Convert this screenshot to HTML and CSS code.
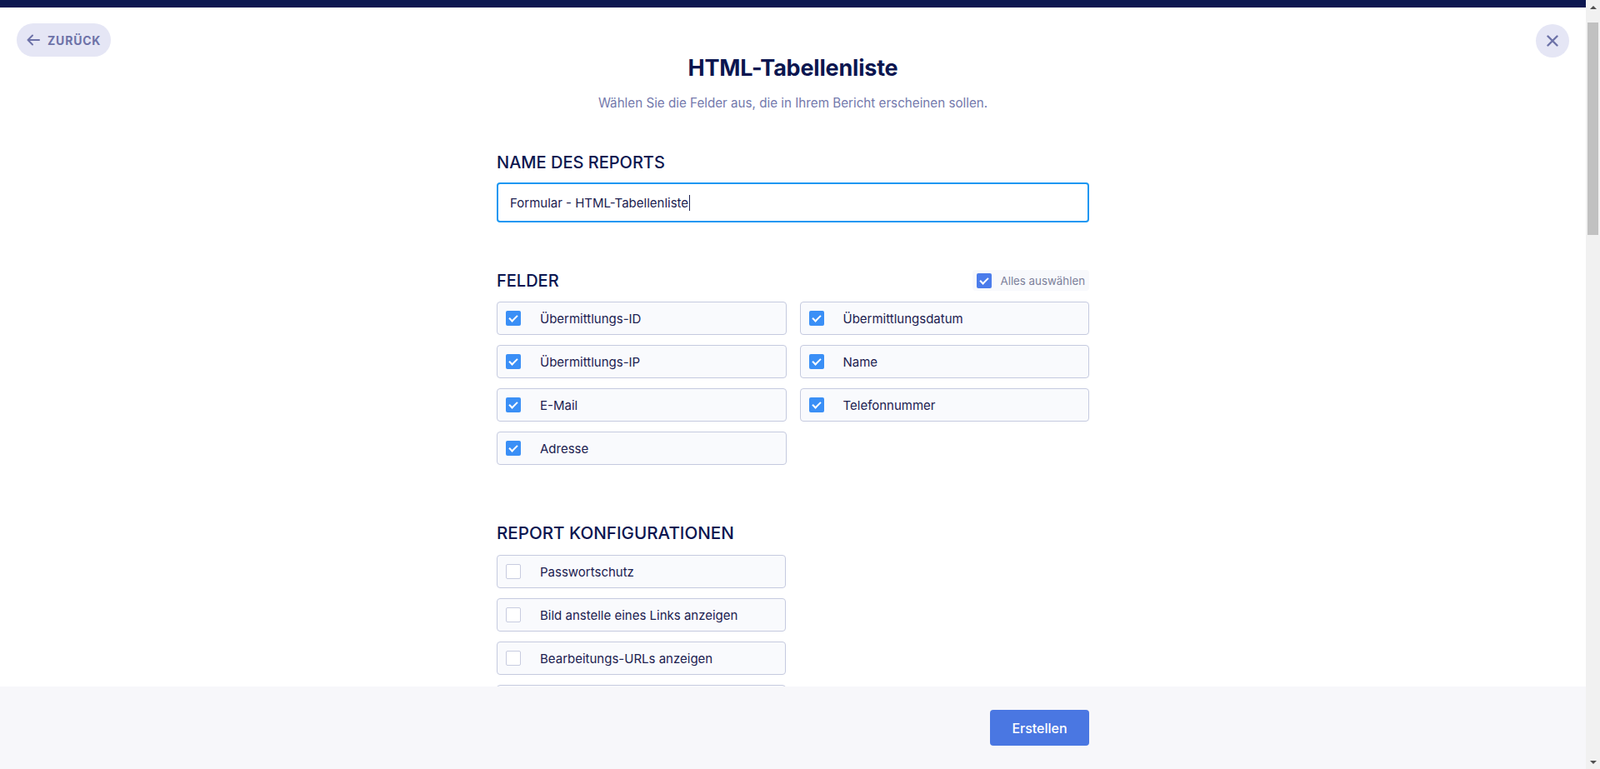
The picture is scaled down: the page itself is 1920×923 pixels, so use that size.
FILE: index.html
```html
<!DOCTYPE html>
<html lang="de">
<head>
    <meta charset="UTF-8">
    <meta name="viewport" content="width=device-width, initial-scale=1.0">
    <title>HTML-Tabellenliste</title>
    <link rel="stylesheet" href="styles.css">
</head>
<body>
    <div class="topbar"></div>

    <div class="head">
        <button class="back-btn">
            <svg width="16" height="14" viewBox="0 0 16 14" fill="none" stroke="currentColor" stroke-width="2" stroke-linecap="round" stroke-linejoin="round">
                <path d="M15 7H1.5M7 1.5L1.5 7L7 12.5"/>
            </svg>
            ZURÜCK
        </button>
        <div class="intro">
            <h1>HTML-Tabellenliste</h1>
            <p>Wählen Sie die Felder aus, die in Ihrem Bericht erscheinen sollen.</p>
        </div>
        <button class="close-btn">
            <svg width="14" height="14" viewBox="0 0 14 14" fill="none" stroke="currentColor" stroke-width="2.4" stroke-linecap="round">
                <path d="M1.5 1.5L12.5 12.5M12.5 1.5L1.5 12.5"/>
            </svg>
        </button>
    </div>

    <main class="content">
        <section>
            <h2>NAME DES REPORTS</h2>
            <div class="text-input">Formular - HTML-Tabellenliste<span class="caret"></span></div>
        </section>

        <section class="felder">
            <div class="section-head">
                <h2>FELDER</h2>
                <label class="select-all">
                    <span class="box checked alt"></span>
                    Alles auswählen
                </label>
            </div>
            <div class="field-grid">
                <label class="option"><span class="box checked"></span>Übermittlungs-ID</label>
                <label class="option"><span class="box checked"></span>Übermittlungsdatum</label>
                <label class="option"><span class="box checked"></span>Übermittlungs-IP</label>
                <label class="option"><span class="box checked"></span>Name</label>
                <label class="option"><span class="box checked"></span>E-Mail</label>
                <label class="option"><span class="box checked"></span>Telefonnummer</label>
                <label class="option"><span class="box checked"></span>Adresse</label>
            </div>
        </section>

        <section class="config">
            <h2>REPORT KONFIGURATIONEN</h2>
            <div class="config-list">
                <label class="option"><span class="box"></span>Passwortschutz</label>
                <label class="option"><span class="box"></span>Bild anstelle eines Links anzeigen</label>
                <label class="option"><span class="box"></span>Bearbeitungs-URLs anzeigen</label>
                <label class="option"><span class="box"></span>Leere Felder ausblenden</label>
            </div>
        </section>
    </main>

    <footer class="footer">
        <div class="footer-inner">
            <button class="create-btn">Erstellen</button>
        </div>
    </footer>

    <!-- nachgebildete Fenster-Scrollleiste -->
    <aside class="scrollbar">
        <span class="sb-arrow up"></span>
        <span class="sb-track"><span class="sb-thumb"></span></span>
        <span class="sb-arrow down"></span>
    </aside>
</body>
</html>
```

FILE: styles.css
```css
body {
    margin: 0;
    padding-right: 17px;
    background: #fff;
    font-family: Inter, "Noto Sans", sans-serif;
    color: #0b1650;
    overflow: hidden;
}

.topbar {
    height: 9px;
    background: #0b1650;
}

.head {
    display: grid;
    grid-template-columns: 1fr auto 1fr;
    align-items: start;
    padding: 19px 20px 0;
}

.back-btn {
    justify-self: start;
    display: flex;
    align-items: center;
    gap: 9px;
    height: 40px;
    padding: 0 12px 0 12px;
    border: none;
    border-radius: 20px;
    background: #e5e6f5;
    color: #6d72a8;
    font-family: inherit;
    font-size: 14px;
    font-weight: 700;
    letter-spacing: 0.8px;
    cursor: pointer;
}

.close-btn {
    justify-self: end;
    width: 40px;
    height: 40px;
    margin-top: 1px;
    border: none;
    border-radius: 50%;
    background: #e5e6f5;
    color: #6d72a8;
    display: flex;
    align-items: center;
    justify-content: center;
    cursor: pointer;
}

.intro {
    text-align: center;
}

.intro h1 {
    margin: 34px 0 0;
    font-size: 27px;
    line-height: 40px;
    font-weight: 700;
    letter-spacing: -0.2px;
    color: #0b1650;
}

.intro p {
    margin: 10px 0 0;
    font-size: 15.2px;
    line-height: 24px;
    color: #7479ac;
}

.content {
    width: 711px;
    margin: 47px auto 0;
    padding-bottom: 140px;
}

h2 {
    margin: 0 0 12px;
    font-size: 20px;
    line-height: 24px;
    font-weight: 500;
    color: #0b1650;
}

.text-input {
    height: 48px;
    box-sizing: border-box;
    border: 2px solid #1b97f2;
    border-radius: 4px;
    padding: 0 14px;
    display: flex;
    align-items: center;
    font-size: 15px;
    color: #1c2150;
}

.caret {
    display: inline-block;
    width: 1px;
    height: 19px;
    margin-left: 1px;
    background: #1c2150;
}

.felder {
    margin-top: 57px;
}

.section-head {
    display: flex;
    justify-content: space-between;
    align-items: center;
    margin-bottom: 13px;
}

.section-head h2 {
    margin: 0;
}

.select-all {
    display: flex;
    align-items: center;
    gap: 10px;
    height: 25px;
    padding: 0 5px;
    border-radius: 4px;
    background: #f8f9fc;
    font-size: 13.3px;
    color: #7c809a;
}

.field-grid {
    display: grid;
    grid-template-columns: 1fr 1fr;
    gap: 12px 16px;
}

.config {
    margin-top: 70px;
}

.config h2 {
    font-size: 20.6px;
    margin-bottom: 14px;
}

.config-list {
    display: flex;
    flex-direction: column;
    gap: 12px;
    width: 347px;
}

.option {
    display: flex;
    align-items: center;
    gap: 23px;
    height: 40px;
    box-sizing: border-box;
    padding: 0 10px;
    border: 1px solid #c5cadf;
    border-radius: 4px;
    background: #f9fafd;
    font-size: 15px;
    color: #1c2150;
}

.box {
    flex: none;
    width: 18px;
    height: 18px;
    box-sizing: border-box;
    border: 1px solid #c8cce0;
    border-radius: 2px;
    background: #fff;
    position: relative;
}

.box.checked {
    border: none;
    background: #3a8ff6;
}

.box.checked.alt {
    background: #4b7ceb;
}

.box.checked::after {
    content: "";
    position: absolute;
    left: 6px;
    top: 3px;
    width: 4px;
    height: 8px;
    border: solid #fff;
    border-width: 0 2px 2px 0;
    transform: rotate(45deg);
}

.footer {
    position: fixed;
    left: 0;
    right: 17px;
    bottom: 0;
    height: 99px;
    background: #f7f7fa;
    display: flex;
    align-items: center;
}

.footer-inner {
    width: 711px;
    margin: 0 auto;
    display: flex;
    justify-content: flex-end;
}

.create-btn {
    width: 119px;
    height: 43px;
    border: none;
    border-radius: 4px;
    background: #4a77e2;
    color: #fff;
    font-family: inherit;
    font-size: 16px;
    font-weight: 500;
    cursor: pointer;
}

.scrollbar {
    position: fixed;
    top: 0;
    right: 0;
    bottom: 0;
    width: 17px;
    background: #f1f1f1;
    display: flex;
    flex-direction: column;
}

.sb-arrow {
    height: 17px;
    display: flex;
    align-items: center;
    justify-content: center;
}

.sb-arrow::before {
    content: "";
    border-left: 4px solid transparent;
    border-right: 4px solid transparent;
}

.sb-arrow.up::before {
    border-bottom: 4px solid #505050;
}

.sb-arrow.down::before {
    border-top: 4px solid #505050;
}

.sb-track {
    flex: 1;
    padding: 10px 2px 0;
}

.sb-thumb {
    display: block;
    height: 255px;
    background: #c1c1c1;
}
```
